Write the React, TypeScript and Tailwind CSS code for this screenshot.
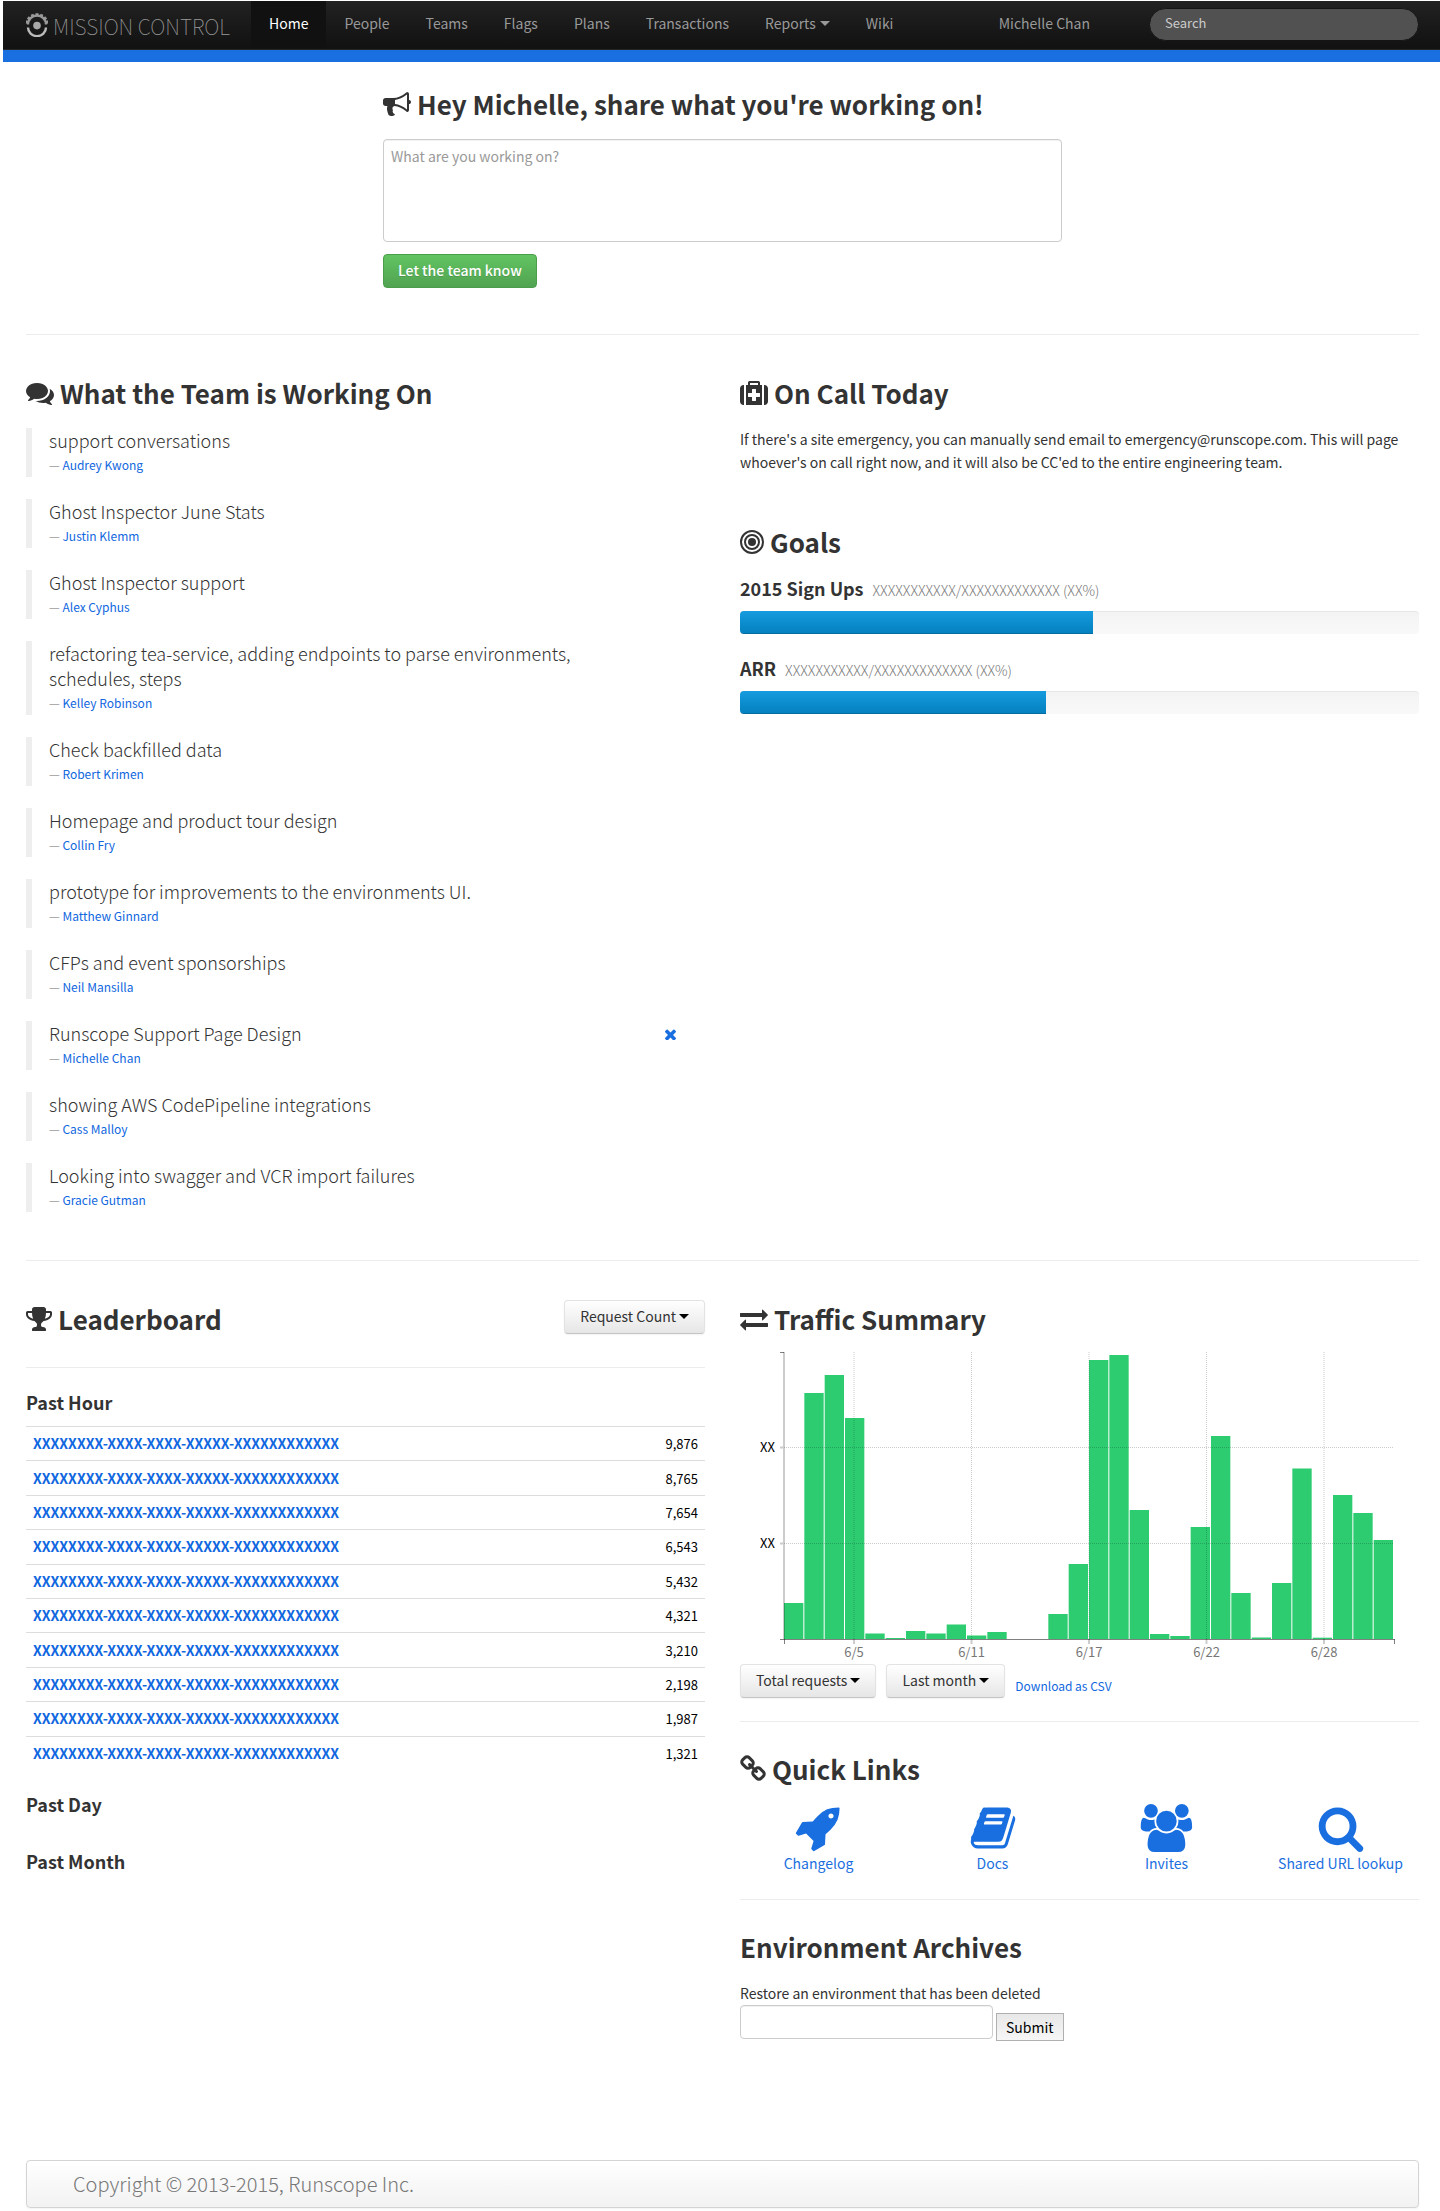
import React from "react";

type IconProps = { box: string; d: string; className?: string };

function Icon({ box, d, className }: IconProps) {
  return (
    <svg viewBox={box} className={className} fill="currentColor" aria-hidden="true">
      <path d={d} />
    </svg>
  );
}

const BULLHORN =
  "M1664 640q53 0 90.5 37.5t37.5 90.5-37.5 90.5-90.5 37.5v384q0 52-38 90t-90 38q-417-347-812-380-58 19-91 66t-31 100.5 40 92.5q-20 33-23 65.5t6 58 33.5 55 48 50 61.5 50.5q-29 58-111.5 83t-168.5 11.5-132-55.5q-7-23-29.5-87.5t-32-94.5-23-89-15-101 3.5-98.5 22-110.5h-122q-66 0-113-47t-47-113v-192q0-66 47-113t113-47h480q435 0 896-384 52 0 90 38t38 90v384zm-128 604v-954q-394 302-768 343v270q377 42 768 341z";
const COMMENTS =
  "M1408 768q0 139-94 257t-256.5 186.5-353.5 68.5q-86 0-176-16-124 88-278 128-36 9-86 16h-3q-11 0-20.5-8t-11.5-21q-1-3-1-6.5t.5-6.5 2-6l2.5-5t3.5-5.5 4-5 4.5-5 4-4.5q5-6 23-25t26-29.5 22.5-29 25-38.5 20.5-44q-124-72-195-177t-71-224q0-139 94-257t256.5-186.5 353.5-68.5 353.5 68.5 256.5 186.5 94 257zm384 256q0 120-71 224.5t-195 176.5q10 24 20.5 44t25 38.5 22.5 29 26 29.5 23 25q1 1 4 4.5t4.5 5 4 5 3.5 5.5l2.5 5t2 6 .5 6.5-1 6.5q-3 14-13 22t-22 7q-50-7-86-16-154-40-278-128-90 16-176 16-271 0-472-132 58 4 88 4 161 0 309-45t264-129q125-92 192-212t67-254q0-77-23-152 129 71 204 178t75 230z";
const MEDKIT =
  "M1280 1120v-192q0-14-9-23t-23-9h-224v-224q0-14-9-23t-23-9h-192q-14 0-23 9t-9 23v224h-224q-14 0-23 9t-9 23v192q0 14 9 23t23 9h224v224q0 14 9 23t23 9h192q14 0 23-9t9-23v-224h224q14 0 23-9t9-23zm-640-736h512v-128h-512v128zm-384 0v1280h-32q-92 0-158-66t-66-158v-832q0-92 66-158t158-66h32zm1152 0v1280h-1024v-1280h128v-160q0-40 28-68t68-28h576q40 0 68 28t28 68v160h128zm384 224v832q0 92-66 158t-158 66h-32v-1280h32q92 0 158 66t66 158z";
const TROPHY =
  "M522 883q-74-162-74-371h-256v96q0 78 94.5 162t235.5 113zm1078-275v-96h-256q0 209-74 371 141-29 235.5-113t94.5-162zm128-128v128q0 71-41.5 143t-112 130-173 97.5-215.5 44.5q-42 54-95 95-38 34-52.5 72.5t-14.5 89.5q0 54 30.5 91t97.5 37q75 0 133.5 45.5t58.5 114.5v64q0 14-9 23t-23 9h-832q-14 0-23-9t-9-23v-64q0-69 58.5-114.5t133.5-45.5q67 0 97.5-37t30.5-91q0-51-14.5-89.5t-52.5-72.5q-53-41-95-95-113-5-215.5-44.5t-173-97.5-112-130-41.5-143v-128q0-40 28-68t68-28h288v-96q0-66 47-113t113-47h576q66 0 113 47t47 113v96h288q40 0 68 28t28 68z";
const EXCHANGE =
  "M1792 1184v192q0 13-9.5 22.5t-22.5 9.5h-1376v192q0 13-9.5 22.5t-22.5 9.5q-12 0-24-10l-319-320q-9-9-9-22 0-14 9-23l320-320q9-9 23-9 13 0 22.5 9.5t9.5 22.5v192h1376q13 0 22.5 9.5t9.5 22.5zm0-544q0 14-9 23l-320 320q-9 9-23 9-13 0-22.5-9.5t-9.5-22.5v-192h-1376q-13 0-22.5-9.5t-9.5-22.5v-192q0-13 9.5-22.5t22.5-9.5h1376v-192q0-14 9-23t23-9q12 0 24 10l319 319q9 9 9 23z";
const LINK =
  "M1520 1216q0-40-28-68l-208-208q-28-28-68-28-42 0-72 32 3 3 19 18.5t21.5 21.5 15 19 13 25.5 3.5 27.5q0 40-28 68t-68 28q-15 0-27.5-3.5t-25.5-13-19-15-21.5-21.5-18.5-19q-33 31-33 73 0 40 28 68l206 207q27 27 68 27 40 0 68-26l147-146q28-28 28-67zm-703-705q0-40-28-68l-206-207q-28-28-68-28-39 0-68 27l-147 146q-28 28-28 67 0 40 28 68l208 208q27 27 68 27 42 0 72-31-3-3-19-18.5t-21.5-21.5-15-19-13-25.5-3.5-27.5q0-40 28-68t68-28q15 0 27.5 3.5t25.5 13 19 15 21.5 21.5 18.5 19q33-31 33-73zm895 705q0 120-85 203l-147 146q-83 83-203 83-121 0-204-85l-206-207q-83-83-83-203 0-123 88-209l-88-88q-86 88-208 88-120 0-204-84l-208-208q-84-84-84-204t85-203l147-146q83-83 203-83 121 0 204 85l206 207q83 83 83 203 0 123-88 209l88 88q86-88 208-88 120 0 204 84l208 208q84 84 84 204z";
const ROCKET =
  "M1440 448q0-40-28-68t-68-28-68 28-28 68 28 68 68 28 68-28 28-68zm224-288q0 249-75.5 430.5t-253.5 360.5q-81 80-195 176l-20 379q-2 16-16 26l-384 224q-7 4-16 4-12 0-23-9l-64-64q-13-14-8-32l85-276-281-281-276 85q-3 1-9 1-14 0-23-9l-64-64q-17-19-5-39l224-384q10-14 26-16l379-20q96-114 176-195 188-187 358-258t431-71q14 0 24 9.5t10 22.5z";
const BOOK =
  "M1703 478q40 57 18 129l-275 906q-19 64-76.5 107.5t-122.5 43.5h-923q-77 0-148.5-53.5t-99.5-131.5q-24-67-2-127 0-4 3-27t4-37q1-8-3-21.5t-3-19.5q2-11 8-21t16.5-23.5 16.5-23.5q23-38 45-91.5t30-91.5q3-10 .5-30t-.5-28q3-11 17-28t17-23q21-36 42-92t25-90q1-9-2.5-32t.5-28q4-13 22-30.5t22-22.5q19-26 42.5-84.5t27.5-96.5q1-8-3-25.5t-2-26.5q2-8 9-18t18-23 17-21q8-12 16.5-30.5t15-35 16-36 19.5-32 26.5-23.5 36-11.5 47.5 5.5l-1 3q38-9 51-9h761q74 0 114 56t18 130l-274 906q-36 119-71.5 153.5t-128.5 34.5h-869q-27 0-38 15-11 16-1 43 24 70 144 70h923q29 0 56-15.5t35-41.5l300-987q7-22 5-57 38 15 59 43zm-1064 2q-4 13 2 22.5t20 9.5h608q13 0 25.5-9.5t16.5-22.5l21-64q4-13-2-22.5t-20-9.5h-608q-13 0-25.5 9.5t-16.5 22.5zm-83 256q-4 13 2 22.5t20 9.5h608q13 0 25.5-9.5t16.5-22.5l21-64q4-13-2-22.5t-20-9.5h-608q-13 0-25.5 9.5t-16.5 22.5z";
const GROUP =
  "M657 896q-162 5-265 128h-134q-82 0-138-40.5t-56-118.5q0-353 124-353 6 0 43.5 21t97.5 42.5 119 21.5q67 0 133-23-5 37-5 66 0 159 81 256zm1071 637q0 120-73 189.5t-194 69.5h-874q-121 0-194-69.5t-73-189.5q0-53 3.5-103.5t14-109 26.5-108.5 43-97.5 62-81 85.5-53.5 111.5-20q10 0 43 21.5t73 48 107 48 135 21.5 135-21.5 107-48 73-48 43-21.5q61 0 111.5 20t85.5 53.5 62 81 43 97.5 26.5 108.5 14 109 3.5 103.5zm-1024-1277q0 106-75 181t-181 75-181-75-75-181 75-181 181-75 181 75 75 181zm704 384q0 159-112.5 271.5t-271.5 112.5-271.5-112.5-112.5-271.5 112.5-271.5 271.5-112.5 271.5 112.5 112.5 271.5zm576 225q0 78-56 118.5t-138 40.5h-134q-103-123-265-128 81-97 81-256 0-29-5-66 66 23 133 23 59 0 119-21.5t97.5-42.5 43.5-21q124 0 124 353zm-128-609q0 106-75 181t-181 75-181-75-75-181 75-181 181-75 181 75 75 181z";
const SEARCH =
  "M1216 832q0-185-131.5-316.5t-316.5-131.5-316.5 131.5-131.5 316.5 131.5 316.5 316.5 131.5 316.5-131.5 131.5-316.5zm512 832q0 52-38 90t-90 38q-54 0-90-38l-343-342q-179 124-399 124-143 0-273.5-55.5t-225-150-150-225-55.5-273.5 55.5-273.5 150-225 225-150 273.5-55.5 273.5 55.5 225 150 150 225 55.5 273.5q0 220-124 399l343 343q37 37 37 90z";
const REMOVE =
  "M1490 1322q0 40-28 68l-136 136q-28 28-68 28t-68-28l-294-294-294 294q-28 28-68 28t-68-28l-136-136q-28-28-28-68t28-68l294-294-294-294q-28-28-28-68t28-68l136-136q28-28 68-28t68 28l294 294 294-294q28-28 68-28t68 28l136 136q28 28 28 68t-28 68l-294 294 294 294q28 28 28 68z";

function Bullseye() {
  return (
    <svg viewBox="128 0 1536 1792" className="h-7" aria-hidden="true">
      <g fill="none" stroke="currentColor" strokeWidth="128">
        <circle cx="896" cy="896" r="704" />
        <circle cx="896" cy="896" r="448" />
      </g>
      <circle cx="896" cy="896" r="256" fill="currentColor" />
    </svg>
  );
}

function Logo() {
  const teeth = [-72, -48, -24, 0, 24, 48, 72];
  return (
    <svg viewBox="0 0 22 24" className="h-6 w-[22px] shrink-0" fill="none" aria-hidden="true">
      <path d="M2 11.5a9 9 0 0 1 18 0" stroke="#999" strokeWidth="2.4" />
      <path d="M2 14.5a9 8.6 0 0 0 18 0" stroke="#bbb" strokeWidth="2.4" />
      {teeth.map((a) => (
        <rect key={a} x="9.5" y="0.2" width="3" height="3" fill="#999" transform={`rotate(${a} 11 12.5)`} />
      ))}
      <circle cx="11" cy="12.6" r="3.8" fill="#aaa" />
    </svg>
  );
}

function Caret() {
  return (
    <svg viewBox="0 0 10 5" className="h-[5px] w-[10px] shrink-0" fill="currentColor" aria-hidden="true">
      <path d="M0 0h10L5 5z" />
    </svg>
  );
}

function Heading({ icon, children }: { icon?: React.ReactNode; children: React.ReactNode }) {
  return (
    <h2 className="flex items-center gap-1.5 text-[26px] leading-[46px] font-bold">
      {icon}
      <span>{children}</span>
    </h2>
  );
}

function DropButton({ children }: { children: React.ReactNode }) {
  return (
    <button
      type="button"
      aria-haspopup="menu"
      className="flex h-[34px] items-center gap-[3px] rounded-[4px] border border-[#e3e3e3] border-b-[#c4c4c4] bg-linear-to-b from-white to-[#e6e6e6] px-[15px] pb-0.5 text-sm shadow-xs"
    >
      {children}
      <span className="text-black">
        <Caret />
      </span>
    </button>
  );
}

function Rule() {
  return <hr className="border-t border-[#ececec]" />;
}

const NAV = ["Home", "People", "Teams", "Flags", "Plans", "Transactions", "Reports", "Wiki"];

const UPDATES = [
  { text: "support conversations", by: "Audrey Kwong" },
  { text: "Ghost Inspector June Stats", by: "Justin Klemm" },
  { text: "Ghost Inspector support", by: "Alex Cyphus" },
  { text: "refactoring tea-service, adding endpoints to parse environments, schedules, steps", by: "Kelley Robinson" },
  { text: "Check backfilled data", by: "Robert Krimen" },
  { text: "Homepage and product tour design", by: "Collin Fry" },
  { text: "prototype for improvements to the environments UI.", by: "Matthew Ginnard" },
  { text: "CFPs and event sponsorships", by: "Neil Mansilla" },
  { text: "Runscope Support Page Design", by: "Michelle Chan", own: true },
  { text: "showing AWS CodePipeline integrations", by: "Cass Malloy" },
  { text: "Looking into swagger and VCR import failures", by: "Gracie Gutman" },
];

const COUNTS = ["9,876", "8,765", "7,654", "6,543", "5,432", "4,321", "3,210", "2,198", "1,987", "1,321"];

const GOALS = [
  { name: "2015 Sign Ups", percent: 52 },
  { name: "ARR", percent: 45 },
];

const BARS = [
  36, 246, 264, 221, 5.5, 1, 8, 5.5, 14.5, 3.5, 7, 0, 0, 25, 75, 279, 284, 129, 5, 3, 112, 203, 46, 1.5, 56, 170.5,
  1.3, 144, 126, 99,
];

const DAYS = [
  { x: 114, label: "6/5" },
  { x: 231.5, label: "6/11" },
  { x: 349, label: "6/17" },
  { x: 466.5, label: "6/22" },
  { x: 584, label: "6/28" },
];

function TrafficChart() {
  const base = 291;
  const step = 610 / 30;
  return (
    <svg viewBox="0 0 679 312" className="w-full" role="img" aria-label="Requests per day">
      {BARS.map((h, i) => (
        <rect key={i} x={44 + i * step} y={base - h} width={step - 1} height={h} fill="#2ecc71" />
      ))}
      <g stroke="#000" strokeOpacity="0.2" strokeDasharray="1 1">
        <path d="M44 99.5H654M44 195.5H654" />
        {DAYS.map((d) => (
          <path key={d.label} d={`M${d.x} 4V291`} />
        ))}
      </g>
      <g stroke="#000" strokeOpacity="0.2" strokeWidth="2">
        <path d="M44 4V291M40 99.5H44M40 195.5H44" />
        {DAYS.map((d) => (
          <path key={d.label} d={`M${d.x} 291V296`} />
        ))}
      </g>
      <path d="M40 4.5H44M40 291.5H654.5M44.5 291V296M654.5 291V296" fill="none" stroke="#000" strokeOpacity="0.5" />
      <g fontSize="13" fill="#000" textAnchor="end">
        <text x="35" y="104">XX</text>
        <text x="35" y="200">XX</text>
      </g>
      <g fontSize="13" fill="#777" textAnchor="middle">
        {DAYS.map((d) => (
          <text key={d.label} x={d.x} y="309">
            {d.label}
          </text>
        ))}
      </g>
    </svg>
  );
}

const LINKS = [
  { label: "Changelog", box: "0 0 1792 1792", d: ROCKET },
  { label: "Docs", box: "0 0 1792 1792", d: BOOK },
  { label: "Invites", box: "0 0 2048 1792", d: GROUP },
  { label: "Shared URL lookup", box: "0 0 1792 1792", d: SEARCH },
];

export default function App() {
  return (
    <div className="bg-white pt-px font-['Noto_Sans_CJK_SC','Noto_Sans',sans-serif] text-sm leading-[23px] text-[#333]">
      <header className="ml-[3px] border-b-[12px] border-[#1a6fe0]">
        <div className="flex h-[49px] items-stretch border-b border-[#252525] bg-linear-to-b from-[#222] to-[#111] pl-[23px] text-[#999]">
          <a href="#" className="mr-[21px] flex items-center gap-[5px] pb-px">
            <Logo />
            <span className="pt-[3px] text-[21px] font-thin">MISSION CONTROL</span>
          </a>
          <nav className="flex">
            {NAV.map((item) => (
              <a
                key={item}
                href="#"
                className={
                  item === "Home"
                    ? "flex items-center bg-[#111] px-[18px] pb-[3px] text-white"
                    : "flex items-center gap-1 px-[18px] pb-[3px]"
                }
              >
                {item}
                {item === "Reports" && <Caret />}
              </a>
            ))}
          </nav>
          <a href="#" className="ml-auto flex items-center px-[18px] pb-[3px]">
            Michelle Chan
          </a>
          <input
            type="search"
            aria-label="Search"
            placeholder="Search"
            className="mt-[7px] mr-[21px] ml-[41px] h-[33px] w-[270px] rounded-full border border-[#151515] bg-[#515151] px-[15px] pb-1 text-[13px] text-white placeholder:text-[#ccc]"
          />
        </div>
      </header>

      <main className="pt-[19px] pr-[21px] pl-[26px]">
        <form className="mx-auto w-[679px] max-w-full">
          <Heading icon={<Icon box="0 0 1792 1792" d={BULLHORN} className="h-7" />}>
            <label htmlFor="status">Hey Michelle, share what you're working on!</label>
          </Heading>
          <textarea
            id="status"
            placeholder="What are you working on?"
            className="mt-3 block h-[103px] w-full resize-none rounded-[4px] border border-[#ccc] px-[7px] py-[5px] inset-shadow-2xs placeholder:text-[#999]"
          />
          <button
            type="button"
            className="mt-3 h-[34px] rounded-[4px] border border-[#4a9e4a] bg-linear-to-b from-[#62c462] to-[#51a351] px-[14px] pb-0.5 font-medium text-white text-shadow-2xs"
          >
            Let the team know
          </button>
        </form>
        <div className="mt-[46px]">
          <Rule />
        </div>

        <div className="mt-[35px] grid grid-cols-2 gap-[35px]">
          <section>
            <Heading icon={<Icon box="0 0 1792 1792" d={COMMENTS} className="h-7" />}>
              What the Team is Working On
            </Heading>
            <ul className="mt-3 flex flex-col gap-[22px]">
              {UPDATES.map((u) => (
                <li key={u.by} className="flex items-start justify-between border-l-[6px] border-[#eee] pl-[17px]">
                  <blockquote className="w-5/6">
                    <p className="text-lg leading-[25px] font-light">{u.text}</p>
                    <footer className="text-xs leading-6 text-[#999]">
                      —{" "}
                      <a href="#" className="text-[#1067e0]">
                        {u.by}
                      </a>
                    </footer>
                  </blockquote>
                  {u.own && (
                    <button type="button" aria-label="Remove update" className="mt-2 mr-[29px] text-[#1a6fe0]">
                      <Icon box="302 302 1188 1188" d={REMOVE} className="size-[11px]" />
                    </button>
                  )}
                </li>
              ))}
            </ul>
          </section>

          <section>
            <Heading icon={<Icon box="0 0 1792 1792" d={MEDKIT} className="h-7" />}>On Call Today</Heading>
            <p className="mt-3">
              If there's a site emergency, you can manually send email to emergency@runscope.com. This will page
              whoever's on call right now, and it will also be CC'ed to the entire engineering team.
            </p>
            <div className="mt-[45px]">
              <Heading icon={<Bullseye />}>Goals</Heading>
            </div>
            {GOALS.map((g) => (
              <div key={g.name} className="mt-3 mb-[23px]">
                <h3 className="flex h-[23px] items-baseline gap-[9px] text-lg leading-[23px] font-bold">
                  {g.name}
                  <small className="text-sm leading-none font-light text-[#777]">XXXXXXXXXXX/XXXXXXXXXXXXX (XX%)</small>
                </h3>
                <div className="mt-[11px] h-[23px] overflow-hidden rounded-[4px] bg-linear-to-b from-[#f3f3f3] to-[#f9f9f9] inset-shadow-2xs">
                  <div
                    className="h-full bg-linear-to-b from-[#149bdf] to-[#0480be] shadow-[inset_0_-1px_0_rgba(0,0,0,0.15)]"
                    style={{ width: `${g.percent}%` }}
                  />
                </div>
              </div>
            ))}
          </section>
        </div>

        <div className="mt-12">
          <Rule />
        </div>

        <div className="mt-[35px] grid grid-cols-2 gap-[35px]">
          <section>
            <div className="flex items-start justify-between">
              <Heading icon={<Icon box="64 0 1664 1792" d={TROPHY} className="h-7" />}>Leaderboard</Heading>
              <div className="pt-1">
                <DropButton>Request Count</DropButton>
              </div>
            </div>
            <div className="mt-[25px]">
              <Rule />
            </div>
            <h3 className="mt-[23px] text-lg leading-[23px] font-bold">Past Hour</h3>
            <table className="mt-3 h-[344px] w-full">
              <tbody>
                {COUNTS.map((n) => (
                  <tr key={n} className="border-t border-[#ddd]">
                    <td className="pl-[7px] font-bold">
                      <a href="#" className="text-[#1067e0]">
                        XXXXXXXX-XXXX-XXXX-XXXXX-XXXXXXXXXXXX
                      </a>
                    </td>
                    <td className="pr-[7px] text-right text-[13px] text-black">{n}</td>
                  </tr>
                ))}
              </tbody>
            </table>
            <h3 className="mt-[23px] text-lg leading-[23px] font-bold">Past Day</h3>
            <h3 className="mt-[34px] text-lg leading-[23px] font-bold">Past Month</h3>
          </section>

          <section>
            <Heading icon={<Icon box="0 0 1792 1792" d={EXCHANGE} className="h-7" />}>Traffic Summary</Heading>
            <div className="mt-1.5">
              <TrafficChart />
            </div>
            <div className="mt-1 flex items-center gap-[10px]">
              <DropButton>Total requests</DropButton>
              <DropButton>Last month</DropButton>
              <a href="#" className="pt-2.5 text-xs text-[#1067e0]">
                Download as CSV
              </a>
            </div>
            <div className="mt-[23px]">
              <Rule />
            </div>
            <div className="mt-6">
              <Heading icon={<Icon box="64 0 1664 1792" d={LINK} className="h-7" />}>Quick Links</Heading>
            </div>
            <div className="mt-3 grid grid-cols-4 gap-[17px]">
              {LINKS.map((l) => (
                <a key={l.label} href="#" className="flex flex-col items-center text-[#1a6fe0]">
                  <Icon box={l.box} d={l.d} className="h-12" />
                  {l.label}
                </a>
              ))}
            </div>
            <div className="mt-6">
              <Rule />
            </div>
            <div className="mt-6">
              <Heading>Environment Archives</Heading>
            </div>
            <form className="mt-3">
              <label htmlFor="restore" className="block">
                Restore an environment that has been deleted
              </label>
              <div className="flex items-end gap-[3px]">
                <input
                  id="restore"
                  type="text"
                  className="mb-0.5 h-[34px] w-[253px] rounded-[4px] border border-[#ccc] px-2 inset-shadow-2xs"
                />
                <button
                  type="button"
                  className="h-7 border border-[#b0b0b0] bg-linear-to-b from-[#e8e8e8] to-[#f6f6f6] px-[9px] text-black"
                >
                  Submit
                </button>
              </div>
            </form>
          </section>
        </div>

        <footer className="mt-[119px] mb-[3px] flex h-12 items-center rounded-[4px] border border-[#d4d4d4] bg-linear-to-b from-white to-[#f2f2f2] pl-[46px] text-xl font-light text-[#777] shadow-xs">
          Copyright © 2013-2015, Runscope Inc.
        </footer>
      </main>
    </div>
  );
}
